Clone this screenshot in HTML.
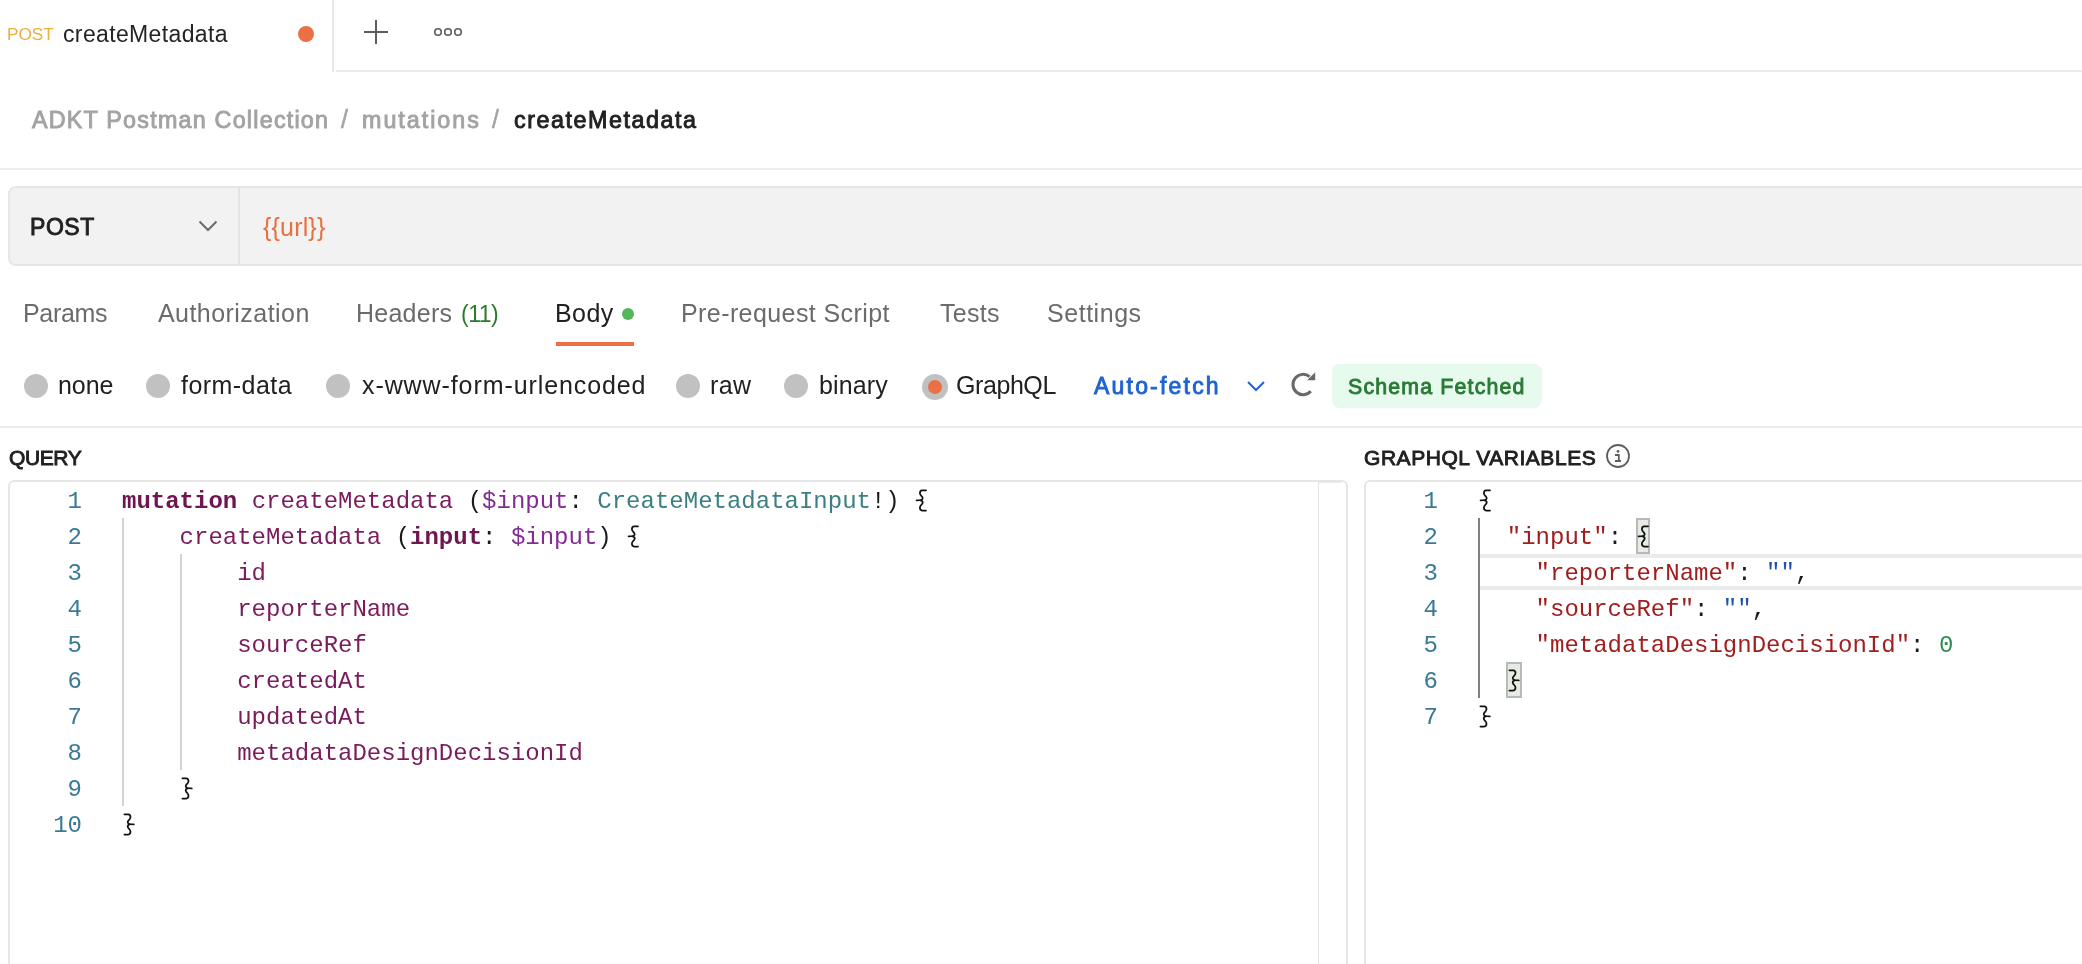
<!DOCTYPE html>
<html><head><meta charset="utf-8"><title>createMetadata</title>
<style>
html,body{margin:0;padding:0;background:#ffffff;width:2082px;height:964px;overflow:hidden;}
body{position:relative;font-family:"Liberation Sans", sans-serif;-webkit-font-smoothing:antialiased;}
.t,.ln,.cl{will-change:transform;}
.a{position:absolute;box-sizing:border-box;}
.t{position:absolute;white-space:pre;line-height:1;font-family:"Liberation Sans", sans-serif;}
.ln{position:absolute;width:200px;text-align:right;font-family:"Liberation Mono", monospace;font-size:24px;line-height:36px;height:36px;color:#3a7a96;white-space:pre;}
.cl{position:absolute;font-family:"Liberation Mono", monospace;font-size:24px;line-height:36px;height:36px;white-space:pre;color:#1a1a1a;}
svg{position:absolute;overflow:visible;}
</style></head>
<body>
<!-- tab bar -->
<div class="a" style="left:332px;top:0;width:2px;height:72px;background:#e9e9e9"></div>
<div class="a" style="left:336px;top:70px;width:1746px;height:2px;background:#ebebeb"></div>
<div class="a" style="left:298px;top:26px;width:16px;height:16px;border-radius:50%;background:#ec7046"></div>
<svg style="left:0;top:0" width="2082" height="72">
  <path d="M364 32H388M376 20V44" stroke="#5c5c5c" stroke-width="2" fill="none"/>
  <circle cx="438" cy="32" r="3.3" stroke="#5c5c5c" stroke-width="1.6" fill="none"/>
  <circle cx="448" cy="32" r="3.3" stroke="#5c5c5c" stroke-width="1.6" fill="none"/>
  <circle cx="458" cy="32" r="3.3" stroke="#5c5c5c" stroke-width="1.6" fill="none"/>
</svg>
<!-- breadcrumb divider -->
<div class="a" style="left:0;top:168px;width:2082px;height:2px;background:#ededed"></div>
<!-- url bar -->
<div class="a" style="left:8px;top:186px;width:2090px;height:80px;border:2px solid #e6e6e6;border-radius:8px;background:#f2f2f2"></div>
<div class="a" style="left:238px;top:188px;width:2px;height:76px;background:#e3e3e3"></div>
<svg style="left:0;top:0" width="400" height="300">
  <path d="M199.5 221.5L208 230L216.5 221.5" stroke="#6b6b6b" stroke-width="2" fill="none"/>
</svg>
<!-- body tab underline and dot -->
<div class="a" style="left:556px;top:342px;width:78px;height:4px;background:#ec7046"></div>
<div class="a" style="left:622px;top:308px;width:12px;height:12px;border-radius:50%;background:#55b65b"></div>
<!-- radios -->
<div class="a" style="left:24px;top:374px;width:24px;height:24px;border-radius:50%;background:#c1c1c1"></div>
<div class="a" style="left:146px;top:374px;width:24px;height:24px;border-radius:50%;background:#c1c1c1"></div>
<div class="a" style="left:326px;top:374px;width:24px;height:24px;border-radius:50%;background:#c1c1c1"></div>
<div class="a" style="left:676px;top:374px;width:24px;height:24px;border-radius:50%;background:#c1c1c1"></div>
<div class="a" style="left:784px;top:374px;width:24px;height:24px;border-radius:50%;background:#c1c1c1"></div>
<div class="a" style="left:922px;top:374px;width:26px;height:26px;border-radius:50%;background:#c1c1c1"></div>
<div class="a" style="left:928px;top:380px;width:14px;height:14px;border-radius:50%;background:#ec7046"></div>
<svg style="left:0;top:0" width="2082" height="430">
  <path d="M1248 382L1256 390L1264 382" stroke="#1f63d6" stroke-width="2" fill="none"/>
  <path d="M1310.8 391.3A10.2 10.2 0 1 1 1309.6 376.6" stroke="#686868" stroke-width="3" fill="none"/>
  <path d="M1315.2 372.2L1315.2 380.2L1307.2 380.2Z" fill="#686868"/>
</svg>
<div class="a" style="left:1332px;top:364px;width:210px;height:44px;border-radius:8px;background:#e7faee"></div>
<div class="a" style="left:0;top:426px;width:2082px;height:2px;background:#ebebeb"></div>
<!-- info icon -->
<svg style="left:0;top:0" width="2082" height="480">
  <circle cx="1618" cy="456" r="11" stroke="#5e5e5e" stroke-width="1.8" fill="none"/>
  <circle cx="1618" cy="451.4" r="1.4" fill="#5e5e5e"/>
  <path d="M1615 455H1618.8V460M1615 461H1621" stroke="#5e5e5e" stroke-width="1.8" fill="none"/>
</svg>
<!-- editors -->
<div class="a" style="left:8px;top:480px;width:1340px;height:520px;border:2px solid #e6e6e6;border-radius:6px;"></div>
<div class="a" style="left:1318px;top:482px;width:1px;height:500px;background:#e3e3e3"></div>
<div class="a" style="left:1319px;top:482px;width:22px;height:1px;background:#e9e9e9"></div>
<div class="a" style="left:1364px;top:480px;width:800px;height:520px;border:2px solid #e6e6e6;border-radius:6px;"></div>
<!-- guides -->
<div class="a" style="left:122px;top:518px;width:2px;height:288px;background:#d3d3d3"></div>
<div class="a" style="left:180px;top:554px;width:2px;height:216px;background:#d3d3d3"></div>
<div class="a" style="left:1478px;top:518px;width:2px;height:180px;background:#808080"></div>
<!-- active line -->
<div class="a" style="left:1480px;top:554px;width:700px;height:36px;border-top:4px solid #ebebeb;border-bottom:4px solid #ebebeb;"></div>
<!-- bracket match -->
<div class="a" style="left:1636px;top:518px;width:14px;height:36px;border:2px solid #b8b8b8;background:#e6ece4"></div>
<div class="a" style="left:1506px;top:662px;width:16px;height:36px;border:2px solid #b8b8b8;background:#e6ece4"></div>
<div class="t" id="tabPOST" style="left:7.25px;top:26.44px;font-size:17.2px;color:#f0ad3c;letter-spacing:-0.011px;">POST</div>
<div class="t" id="tabTitle" style="left:62.50px;top:23.28px;font-size:23px;color:#242424;letter-spacing:0.358px;">createMetadata</div>
<div class="t" id="bc1" style="left:32.00px;top:109.08px;font-size:23.3px;color:#a3a3a3;letter-spacing:1.233px;-webkit-text-stroke:0.9px #a3a3a3;">ADKT Postman Collection</div>
<div class="t" id="bcS1" style="left:341.00px;top:106.64px;font-size:25px;color:#a3a3a3;letter-spacing:0.000px;-webkit-text-stroke:0.5px #a3a3a3;">/</div>
<div class="t" id="bc2" style="left:362.00px;top:109.08px;font-size:23.3px;color:#a3a3a3;letter-spacing:1.985px;-webkit-text-stroke:0.9px #a3a3a3;">mutations</div>
<div class="t" id="bcS2" style="left:492.00px;top:106.64px;font-size:25px;color:#a3a3a3;letter-spacing:0.000px;-webkit-text-stroke:0.5px #a3a3a3;">/</div>
<div class="t" id="bc3" style="left:514.00px;top:109.28px;font-size:23.3px;color:#212121;letter-spacing:1.543px;-webkit-text-stroke:0.9px #212121;">createMetadata</div>
<div class="t" id="urlPOST" style="left:30.00px;top:216.13px;font-size:23px;color:#212121;letter-spacing:0.547px;-webkit-text-stroke:0.9px #212121;">POST</div>
<div class="t" id="url" style="left:262.80px;top:215.04px;font-size:25px;color:#e8703f;letter-spacing:0.175px;">{{url}}</div>
<div class="t" id="Params" style="left:23.20px;top:301.44px;font-size:25px;color:#6b6b6b;letter-spacing:-0.330px;">Params</div>
<div class="t" id="Authorization" style="left:157.80px;top:301.44px;font-size:25px;color:#6b6b6b;letter-spacing:0.450px;">Authorization</div>
<div class="t" id="Headers" style="left:356.10px;top:301.44px;font-size:25px;color:#6b6b6b;letter-spacing:0.250px;">Headers</div>
<div class="t" id="h11" style="left:461.00px;top:303.13px;font-size:23px;color:#2b7a2b;letter-spacing:-0.533px;">(11)</div>
<div class="t" id="Body" style="left:555.10px;top:301.44px;font-size:25px;color:#212121;letter-spacing:0.433px;">Body</div>
<div class="t" id="Pre" style="left:681.00px;top:301.44px;font-size:25px;color:#6b6b6b;letter-spacing:0.412px;">Pre-request Script</div>
<div class="t" id="Tests" style="left:940.10px;top:301.44px;font-size:25px;color:#6b6b6b;letter-spacing:0.287px;">Tests</div>
<div class="t" id="Settings" style="left:1047.00px;top:301.44px;font-size:25px;color:#6b6b6b;letter-spacing:0.536px;">Settings</div>
<div class="t" id="none" style="left:57.90px;top:373.30px;font-size:25px;color:#212121;letter-spacing:-0.067px;">none</div>
<div class="t" id="formdata" style="left:181.40px;top:373.30px;font-size:25px;color:#212121;letter-spacing:0.450px;">form-data</div>
<div class="t" id="xwww" style="left:362.10px;top:373.30px;font-size:25px;color:#212121;letter-spacing:0.908px;">x-www-form-urlencoded</div>
<div class="t" id="raw" style="left:709.90px;top:373.30px;font-size:25px;color:#212121;letter-spacing:0.350px;">raw</div>
<div class="t" id="binary" style="left:819.20px;top:373.30px;font-size:25px;color:#212121;letter-spacing:0.120px;">binary</div>
<div class="t" id="GraphQL" style="left:955.80px;top:373.30px;font-size:25px;color:#212121;letter-spacing:-0.425px;">GraphQL</div>
<div class="t" id="Auto" style="left:1094.20px;top:374.63px;font-size:23px;color:#1f63d2;letter-spacing:2.202px;-webkit-text-stroke:0.9px #1f63d2;">Auto-fetch</div>
<div class="t" id="Schema" style="left:1348.00px;top:376.87px;font-size:21.3px;color:#2a7a36;letter-spacing:1.190px;-webkit-text-stroke:0.9px #2a7a36;">Schema Fetched</div>
<div class="t" id="QUERY" style="left:9.10px;top:447.22px;font-size:21px;color:#212121;letter-spacing:-0.385px;-webkit-text-stroke:0.9px #212121;">QUERY</div>
<div class="t" id="GV" style="left:1364.40px;top:447.22px;font-size:21px;color:#212121;letter-spacing:0.549px;-webkit-text-stroke:0.9px #212121;">GRAPHQL VARIABLES</div>
<div class="ln" style="top:484px;left:-118px">1</div>
<div class="cl" style="top:484px;left:122px"><span style="color:#6f1650;font-weight:700">mutation</span><span style="color:#1a1a1a"> </span><span style="color:#7a1b5c">createMetadata</span><span style="color:#1a1a1a"> </span><span style="color:#1a1a1a">(</span><span style="color:#842b95">$input</span><span style="color:#1a1a1a">:</span><span style="color:#1a1a1a"> </span><span style="color:#3b7f82">CreateMetadataInput</span><span style="color:#1a1a1a">!)  </span></div>
<svg style="left:914.0px;top:482px" width="14.4" height="36"><path d="M12 8.3H8.2C6.4 8.3 5.9 9.6 5.9 11.2C5.9 13.6 8.7 14 8.7 16.3C8.7 17.8 7.4 18.4 2.6 18.4M6.6 18.4C8.2 18.7 8.7 19.6 8.7 20.5C8.7 22.8 5.9 23.2 5.9 25.6C5.9 27.2 6.4 28.5 8.2 28.5H12" stroke="#111" stroke-width="1.75" fill="none" stroke-linecap="round"/></svg>
<div class="ln" style="top:520px;left:-118px">2</div>
<div class="cl" style="top:520px;left:122px"><span style="color:#1a1a1a">    </span><span style="color:#7a1b5c">createMetadata</span><span style="color:#1a1a1a"> </span><span style="color:#1a1a1a">(</span><span style="color:#6f1650;font-weight:700">input</span><span style="color:#1a1a1a">:</span><span style="color:#1a1a1a"> </span><span style="color:#842b95">$input</span><span style="color:#1a1a1a">)  </span></div>
<svg style="left:626.0px;top:518px" width="14.4" height="36"><path d="M12 8.3H8.2C6.4 8.3 5.9 9.6 5.9 11.2C5.9 13.6 8.7 14 8.7 16.3C8.7 17.8 7.4 18.4 2.6 18.4M6.6 18.4C8.2 18.7 8.7 19.6 8.7 20.5C8.7 22.8 5.9 23.2 5.9 25.6C5.9 27.2 6.4 28.5 8.2 28.5H12" stroke="#111" stroke-width="1.75" fill="none" stroke-linecap="round"/></svg>
<div class="ln" style="top:556px;left:-118px">3</div>
<div class="cl" style="top:556px;left:122px"><span style="color:#1a1a1a">        </span><span style="color:#7a1b5c">id</span></div>
<div class="ln" style="top:592px;left:-118px">4</div>
<div class="cl" style="top:592px;left:122px"><span style="color:#1a1a1a">        </span><span style="color:#7a1b5c">reporterName</span></div>
<div class="ln" style="top:628px;left:-118px">5</div>
<div class="cl" style="top:628px;left:122px"><span style="color:#1a1a1a">        </span><span style="color:#7a1b5c">sourceRef</span></div>
<div class="ln" style="top:664px;left:-118px">6</div>
<div class="cl" style="top:664px;left:122px"><span style="color:#1a1a1a">        </span><span style="color:#7a1b5c">createdAt</span></div>
<div class="ln" style="top:700px;left:-118px">7</div>
<div class="cl" style="top:700px;left:122px"><span style="color:#1a1a1a">        </span><span style="color:#7a1b5c">updatedAt</span></div>
<div class="ln" style="top:736px;left:-118px">8</div>
<div class="cl" style="top:736px;left:122px"><span style="color:#1a1a1a">        </span><span style="color:#7a1b5c">metadataDesignDecisionId</span></div>
<div class="ln" style="top:772px;left:-118px">9</div>
<div class="cl" style="top:772px;left:122px"><span style="color:#1a1a1a">    </span><span style="color:#1a1a1a"> </span></div>
<svg style="left:179.6px;top:770px" width="14.4" height="36"><path transform="translate(14.4 0) scale(-1 1)" d="M12 8.3H8.2C6.4 8.3 5.9 9.6 5.9 11.2C5.9 13.6 8.7 14 8.7 16.3C8.7 17.8 7.4 18.4 2.6 18.4M6.6 18.4C8.2 18.7 8.7 19.6 8.7 20.5C8.7 22.8 5.9 23.2 5.9 25.6C5.9 27.2 6.4 28.5 8.2 28.5H12" stroke="#111" stroke-width="1.75" fill="none" stroke-linecap="round"/></svg>
<div class="ln" style="top:808px;left:-118px">10</div>
<div class="cl" style="top:808px;left:122px"><span style="color:#1a1a1a"> </span></div>
<svg style="left:122.0px;top:806px" width="14.4" height="36"><path transform="translate(14.4 0) scale(-1 1)" d="M12 8.3H8.2C6.4 8.3 5.9 9.6 5.9 11.2C5.9 13.6 8.7 14 8.7 16.3C8.7 17.8 7.4 18.4 2.6 18.4M6.6 18.4C8.2 18.7 8.7 19.6 8.7 20.5C8.7 22.8 5.9 23.2 5.9 25.6C5.9 27.2 6.4 28.5 8.2 28.5H12" stroke="#111" stroke-width="1.75" fill="none" stroke-linecap="round"/></svg>
<div class="ln" style="top:484px;left:1238px">1</div>
<div class="cl" style="top:484px;left:1478px"><span style="color:#1a1a1a"> </span></div>
<svg style="left:1478.0px;top:482px" width="14.4" height="36"><path d="M12 8.3H8.2C6.4 8.3 5.9 9.6 5.9 11.2C5.9 13.6 8.7 14 8.7 16.3C8.7 17.8 7.4 18.4 2.6 18.4M6.6 18.4C8.2 18.7 8.7 19.6 8.7 20.5C8.7 22.8 5.9 23.2 5.9 25.6C5.9 27.2 6.4 28.5 8.2 28.5H12" stroke="#111" stroke-width="1.75" fill="none" stroke-linecap="round"/></svg>
<div class="ln" style="top:520px;left:1238px">2</div>
<div class="cl" style="top:520px;left:1478px"><span style="color:#1a1a1a">  </span><span style="color:#a01e1e">&quot;input&quot;</span><span style="color:#1a1a1a">:</span><span style="color:#1a1a1a"> </span><span style="color:#1a1a1a"> </span></div>
<svg style="left:1636.4px;top:518px" width="14.4" height="36"><path d="M12 8.3H8.2C6.4 8.3 5.9 9.6 5.9 11.2C5.9 13.6 8.7 14 8.7 16.3C8.7 17.8 7.4 18.4 2.6 18.4M6.6 18.4C8.2 18.7 8.7 19.6 8.7 20.5C8.7 22.8 5.9 23.2 5.9 25.6C5.9 27.2 6.4 28.5 8.2 28.5H12" stroke="#111" stroke-width="1.75" fill="none" stroke-linecap="round"/></svg>
<div class="ln" style="top:556px;left:1238px">3</div>
<div class="cl" style="top:556px;left:1478px"><span style="color:#1a1a1a">    </span><span style="color:#a01e1e">&quot;reporterName&quot;</span><span style="color:#1a1a1a">:</span><span style="color:#1a1a1a"> </span><span style="color:#2153a8">&quot;&quot;</span><span style="color:#1a1a1a">,</span></div>
<div class="ln" style="top:592px;left:1238px">4</div>
<div class="cl" style="top:592px;left:1478px"><span style="color:#1a1a1a">    </span><span style="color:#a01e1e">&quot;sourceRef&quot;</span><span style="color:#1a1a1a">:</span><span style="color:#1a1a1a"> </span><span style="color:#2153a8">&quot;&quot;</span><span style="color:#1a1a1a">,</span></div>
<div class="ln" style="top:628px;left:1238px">5</div>
<div class="cl" style="top:628px;left:1478px"><span style="color:#1a1a1a">    </span><span style="color:#a01e1e">&quot;metadataDesignDecisionId&quot;</span><span style="color:#1a1a1a">:</span><span style="color:#1a1a1a"> </span><span style="color:#2f8a55">0</span></div>
<div class="ln" style="top:664px;left:1238px">6</div>
<div class="cl" style="top:664px;left:1478px"><span style="color:#1a1a1a">  </span><span style="color:#1a1a1a"> </span></div>
<svg style="left:1506.8px;top:662px" width="14.4" height="36"><path transform="translate(14.4 0) scale(-1 1)" d="M12 8.3H8.2C6.4 8.3 5.9 9.6 5.9 11.2C5.9 13.6 8.7 14 8.7 16.3C8.7 17.8 7.4 18.4 2.6 18.4M6.6 18.4C8.2 18.7 8.7 19.6 8.7 20.5C8.7 22.8 5.9 23.2 5.9 25.6C5.9 27.2 6.4 28.5 8.2 28.5H12" stroke="#111" stroke-width="1.75" fill="none" stroke-linecap="round"/></svg>
<div class="ln" style="top:700px;left:1238px">7</div>
<div class="cl" style="top:700px;left:1478px"><span style="color:#1a1a1a"> </span></div>
<svg style="left:1478.0px;top:698px" width="14.4" height="36"><path transform="translate(14.4 0) scale(-1 1)" d="M12 8.3H8.2C6.4 8.3 5.9 9.6 5.9 11.2C5.9 13.6 8.7 14 8.7 16.3C8.7 17.8 7.4 18.4 2.6 18.4M6.6 18.4C8.2 18.7 8.7 19.6 8.7 20.5C8.7 22.8 5.9 23.2 5.9 25.6C5.9 27.2 6.4 28.5 8.2 28.5H12" stroke="#111" stroke-width="1.75" fill="none" stroke-linecap="round"/></svg>
</body></html>
